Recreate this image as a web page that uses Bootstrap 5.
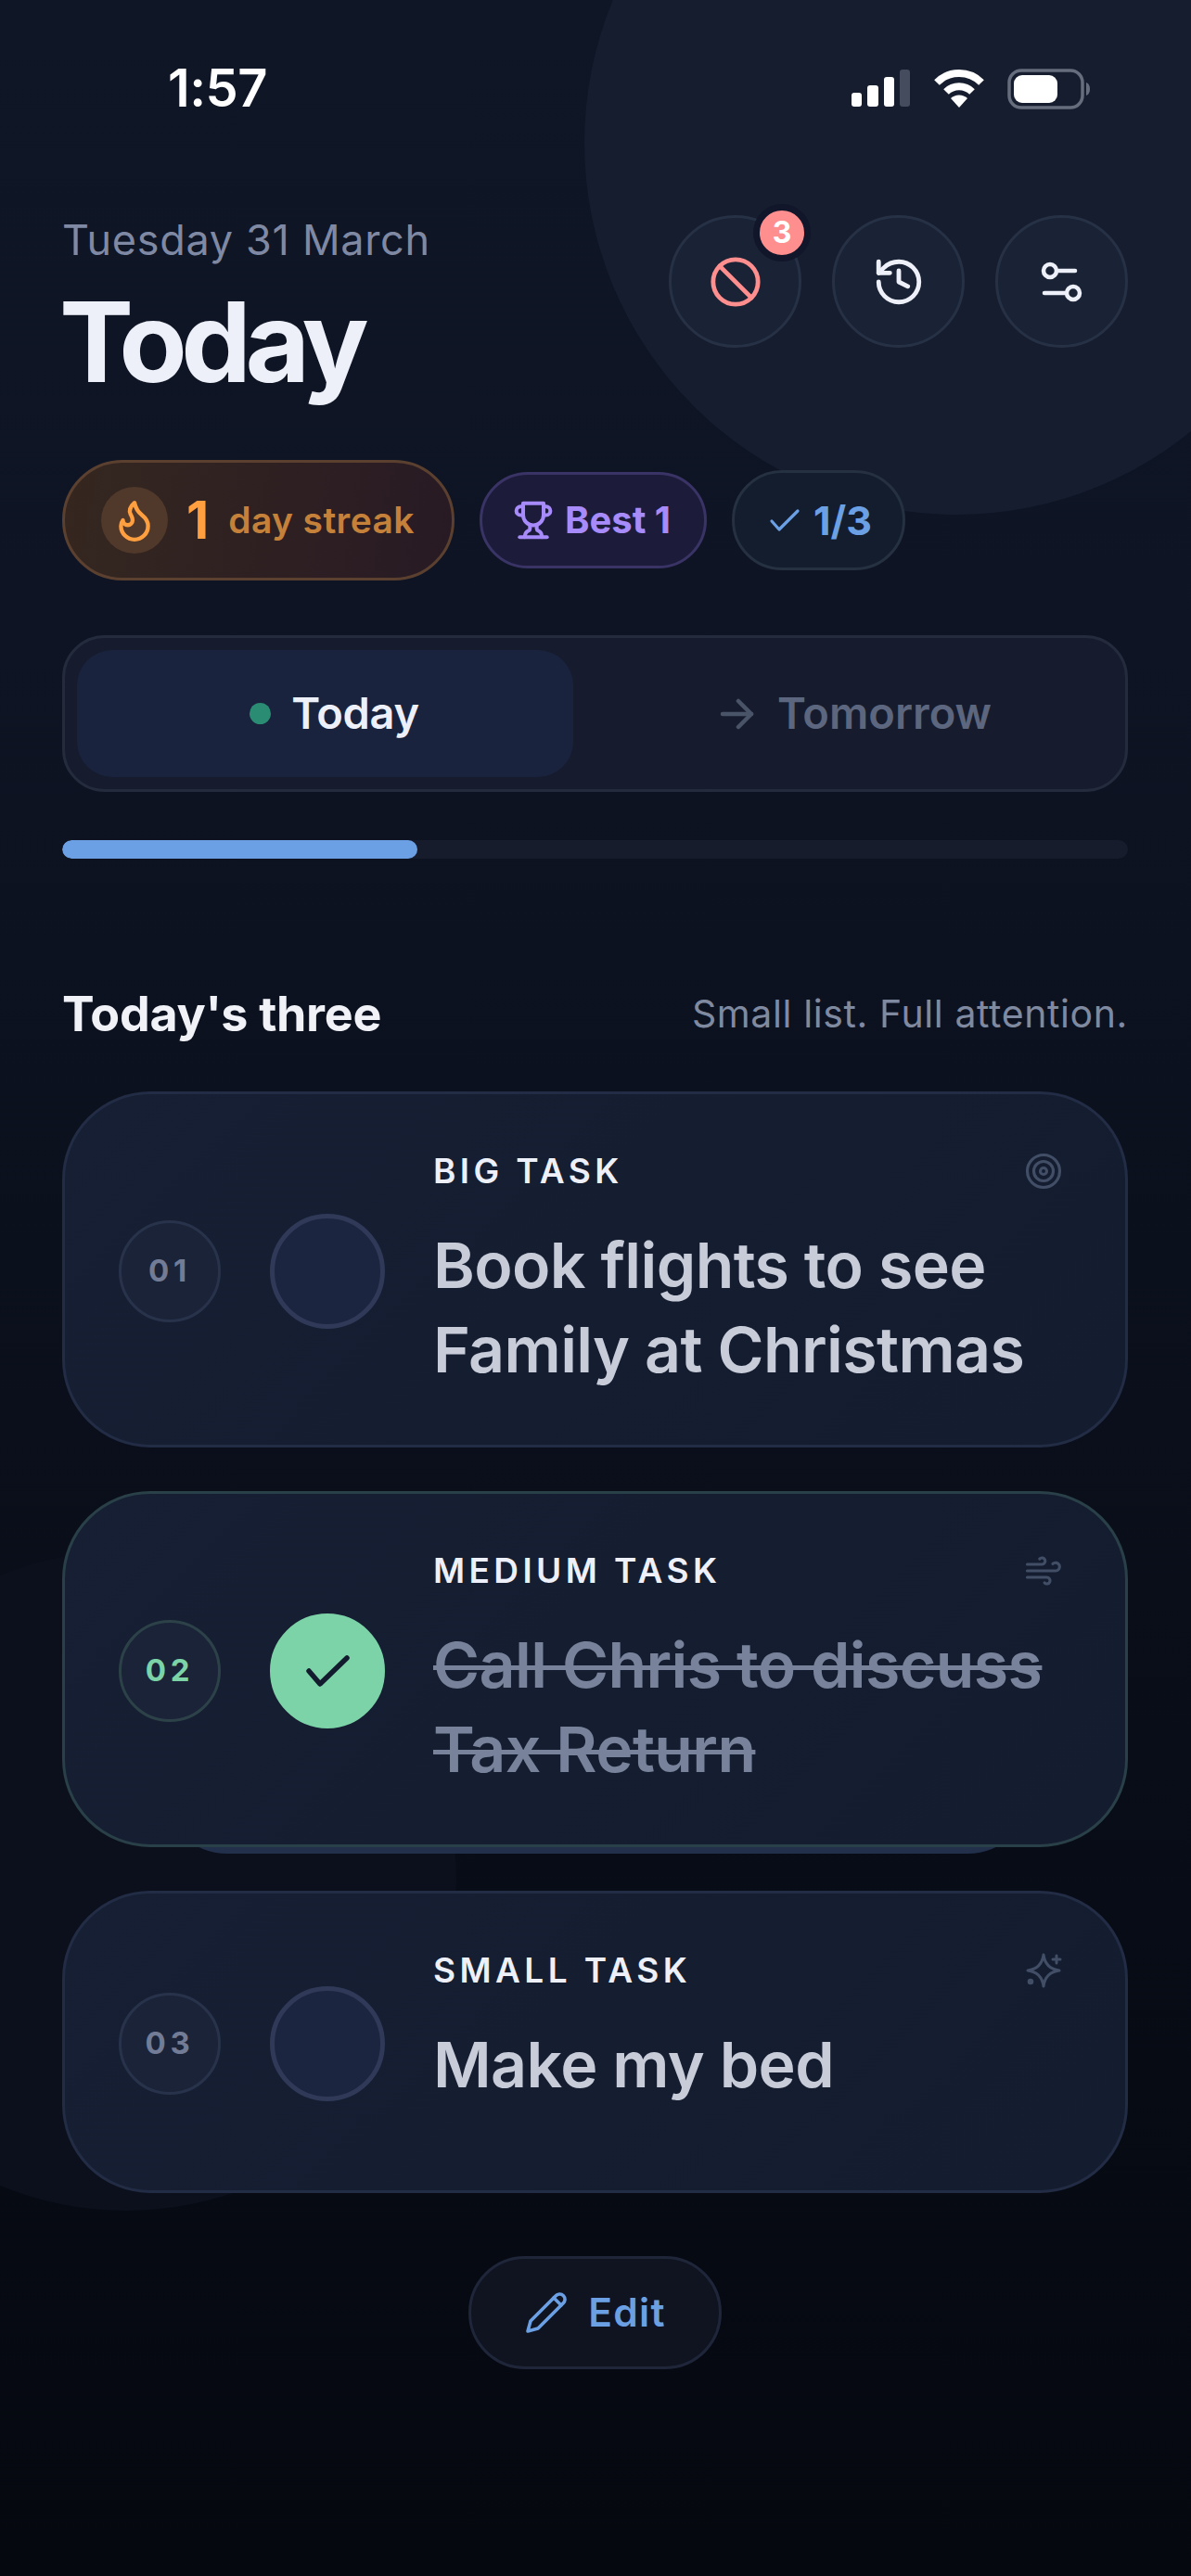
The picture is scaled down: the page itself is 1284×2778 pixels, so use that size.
<!DOCTYPE html>
<html lang="en">
<head>
    <meta charset="UTF-8">
    <meta name="viewport" content="width=device-width, initial-scale=1.0">
    <title>Today</title>
    <link rel="stylesheet" href="https://cdn.jsdelivr.net/npm/bootstrap@5.3.0/dist/css/bootstrap.min.css">
    <style>
        body {
            background: #060a14;
            font-family: "Inter", "Liberation Sans", sans-serif;
        }
        svg { display: block; flex-shrink: 0; fill: none; stroke-linecap: round; stroke-linejoin: round; }
        .screen {
            position: relative;
            z-index: 0;
            width: 1284px;
            height: 2778px;
            overflow: hidden;
            background: linear-gradient(180deg, #0f1626 0%, #0e1423 25%, #0a0f1b 55%, #05080f 100%);
        }
        .glow-top {
            position: absolute; z-index: -1;
            left: 630px; top: -247px;
            width: 802px; height: 802px;
            border-radius: 50%;
            background: #161d2e;
        }
        .glow-low {
            position: absolute; z-index: -1;
            left: -220px; top: 1672px;
            width: 712px; height: 712px;
            border-radius: 50%;
            background: #0b101c;
        }
        .status-row { height: 232px; padding: 67px 108px 0 181px; }
        .clock { font-size: 56px; font-weight: 600; line-height: 56px; color: #fff; letter-spacing: -0.5px; }
        .page-pad { padding: 0 68px 0 67px; }
        .date-line { font-size: 45px; line-height: 52px; margin-top: 1px; color: #7f89a3; letter-spacing: .7px; }
        .big-title { font-size: 120px; font-weight: 700; line-height: 130px; letter-spacing: -6.5px; color: #edf0f8; margin: 19px 0 0 -3px; }
        .round-btn {
            position: relative;
            width: 143px; height: 143px;
            border-radius: 50%;
            background: #1a2335;
            border: 3px solid #263146;
        }
        .ban-count {
            position: absolute;
            top: -15px; right: -13px;
            width: 62px; height: 62px;
            border-radius: 50%;
            background: #ff8e8e;
            border: 7px solid #11162a;
            color: #fff;
            font-size: 32px;
            font-weight: 700;
        }
        .head-row { height: 264px; }
        .chip-row { gap: 27px; height: 130px; }
        .chip {
            border-radius: 60px;
            border: 3px solid;
            font-weight: 700;
        }
        .chip-fire {
            height: 130px; width: 423px;
            padding-left: 39px;
            background: linear-gradient(100deg, #35271f, #281a24);
            border-color: #5b4030;
            border-radius: 65px;
        }
        .fire-dot { width: 72px; height: 72px; border-radius: 50%; background: #50382a; margin-right: 20px; }
        .fire-num { font-size: 56px; font-weight: 700; color: #ff9f3f; margin-right: 21px; }
        .fire-text { font-size: 39px; font-weight: 600; color: #c5813a; letter-spacing: .4px; }
        .chip-best { height: 104px; width: 245px; padding-left: 33px; background: #1c1c3a; border-color: #3a3466; color: #a78bfa; font-size: 40px; gap: 12px; }
        .chip-count { height: 108px; width: 187px; padding-left: 37px; background: #141d2e; border-color: #253040; color: #6ba0e4; font-size: 43px; gap: 14px; }
        .seg-box {
            margin-top: 59px;
            height: 169px;
            padding: 13px;
            gap: 26px;
            background: #161c2d;
            border: 3px solid #232b3d;
            border-radius: 46px;
        }
        .seg-on { width: 535px; padding-left: 20px; background: #19233e; border-radius: 38px; color: #edf0f8; font-size: 47px; font-weight: 600; gap: 22px; letter-spacing: -.3px; }
        .seg-off { flex: 1; color: #5c667e; font-size: 47px; font-weight: 600; gap: 23px; letter-spacing: 0; }
        .seg-dot { width: 23px; height: 23px; border-radius: 50%; background: #2b8c74; }
        .bar-track { margin-top: 52px; height: 20px; border-radius: 10px; background: #161c2c; overflow: hidden; }
        .bar-fill { height: 100%; background: #6ba0e4; border-radius: 10px; }
        .list-head { margin-top: 131px; height: 74px; }
        .list-title { font-size: 52px; font-weight: 700; color: #f0f2f8; letter-spacing: -.3px; }
        .list-note { font-size: 41px; color: #7f89a0; letter-spacing: .6px; }
        .task-list { margin-top: 46px; gap: 47px; }
        .task {
            position: relative;
            min-height: 326px;
            padding: 61px 67px 57px 58px;
            background: linear-gradient(135deg, #161f33, #141c2f);
            border: 3px solid #222c44;
            border-radius: 95px;
        }
        .task-done { border-color: #2a4048; }
        .task-done::after {
            content: "";
            position: absolute; z-index: -1;
            left: 105px; right: 100px; bottom: -10px;
            height: 80px;
            background: #22304c;
            border-radius: 0 0 70px 70px;
        }
        .num-ring {
            width: 110px; height: 110px;
            border-radius: 50%;
            background: #1a2338;
            border: 3px solid #28324a;
            color: #727c96;
            font-size: 33px;
            font-weight: 700;
            letter-spacing: 4.8px;
            margin-right: 53px;
        }
        .task-done .num-ring { border-color: #2c4248; color: #7dd3a8; }
        .tick-ring {
            width: 124px; height: 124px;
            border-radius: 50%;
            background: #1c2540;
            border: 5px solid #303a58;
            margin-right: 52px;
        }
        .task-done .tick-ring { background: #7dd3a8; border-color: #7dd3a8; }
        .task-body { flex: 1; min-width: 0; }
        .task-kind { height: 44px; font-size: 37px; font-weight: 600; letter-spacing: 4.4px; color: #edf0f8; }
        .task-name { margin: 34px 0 0; font-size: 68px; font-weight: 600; line-height: 91px; letter-spacing: -.6px; color: #c8ccd9; }
        .task-done .task-name { color: #78839b; text-decoration: line-through; text-decoration-thickness: 5px; }
        .edit-btn {
            margin-top: 68px;
            width: 273px; height: 122px;
            gap: 21px;
            border-radius: 61px;
            background: #0f1420;
            border: 3px solid #20263a;
            color: #6ba0e4;
            font-size: 42.5px;
            font-weight: 600;
            letter-spacing: 1.3px;
        }
    </style>
</head>
<body class="m-0">
<div class="screen">
    <div class="glow-top"></div>
    <div class="glow-low"></div>

    <div class="status-row d-flex justify-content-between align-items-start">
        <div class="clock">1:57</div>
        <div class="d-flex align-items-center" style="gap:24px;margin-top:7px">
            <svg width="64" height="42" viewBox="0 0 64 42"><rect x="0" y="25" width="11" height="15" rx="3" fill="#fff"/><rect x="17" y="17" width="12" height="23" rx="3" fill="#fff"/><rect x="35" y="8" width="11" height="32" rx="3" fill="#fff"/><rect x="52" y="0" width="11" height="40" rx="3" fill="#454c5e"/></svg>
            <svg width="56" height="42" viewBox="0 0 56 42"><path d="M4 14A34 34 0 0 1 52 14" stroke="#fff" stroke-width="8" stroke-linecap="butt"/><path d="M14 24A20 20 0 0 1 42 24" stroke="#fff" stroke-width="8" stroke-linecap="butt"/><path d="M19 31A13 13 0 0 1 37 31L28 41Z" fill="#fff"/></svg>
            <svg width="90" height="44" viewBox="0 0 90 44"><rect x="2" y="2" width="79" height="40" rx="13" stroke="#666d7d" stroke-width="3.5"/><rect x="7" y="7" width="47" height="30" rx="9" fill="#fff"/><path d="M85 15c3 1 4 4 4 7s-1 6-4 7Z" fill="#666d7d"/></svg>
        </div>
    </div>

    <div class="page-pad">
        <div class="head-row d-flex justify-content-between align-items-start">
            <div>
                <div class="date-line">Tuesday 31 March</div>
                <h1 class="big-title">Today</h1>
            </div>
            <div class="d-flex" style="gap:33px">
                <div class="round-btn d-flex align-items-center justify-content-center">
                    <svg width="58" height="58" viewBox="0 0 24 24" stroke="#ff8e8e" stroke-width="2"><circle cx="12" cy="12" r="10"/><path d="m4.9 4.9 14.2 14.2"/></svg>
                    <span class="ban-count d-flex align-items-center justify-content-center">3</span>
                </div>
                <div class="round-btn d-flex align-items-center justify-content-center">
                    <svg width="58" height="58" viewBox="0 0 24 24" stroke="#edf0f8" stroke-width="2"><path d="M3 12a9 9 0 1 0 9-9 9.75 9.75 0 0 0-6.74 2.74L3 8"/><path d="M3 3v5h5"/><path d="M12 7v5l4 2"/></svg>
                </div>
                <div class="round-btn d-flex align-items-center justify-content-center">
                    <svg width="58" height="58" viewBox="0 0 58 58" stroke="#edf0f8" stroke-width="4.5"><circle cx="16" cy="17" r="7"/><path d="M24 17h19"/><circle cx="41" cy="41" r="7"/><path d="M10 41h23"/></svg>
                </div>
            </div>
        </div>

        <div class="chip-row d-flex align-items-center">
            <div class="chip chip-fire d-flex align-items-center">
                <div class="fire-dot d-flex align-items-center justify-content-center">
                    <svg width="50" height="50" viewBox="0 0 24 24" stroke="#ff9f3f" stroke-width="2.1"><path d="M8.5 14.5A2.5 2.5 0 0 0 11 12c0-1.38-.5-2-1-3-1.072-2.143-.224-4.054 2-6 .5 2.5 2 4.9 4 6.5 2 1.6 3 3.5 3 5.5a7 7 0 1 1-14 0c0-1.153.433-2.294 1-3a2.5 2.5 0 0 0 2.5 2.5z"/></svg>
                </div>
                <span class="fire-num">1</span>
                <span class="fire-text">day streak</span>
            </div>
            <div class="chip chip-best d-flex align-items-center">
                <svg width="44" height="44" viewBox="0 0 24 24" stroke="#a78bfa" stroke-width="2.2"><path d="M6 9H4.5a2.5 2.5 0 0 1 0-5H6"/><path d="M18 9h1.5a2.5 2.5 0 0 0 0-5H18"/><path d="M4 22h16"/><path d="M10 14.66V17c0 .55-.47.98-.97 1.21C7.85 18.75 7 20.24 7 22"/><path d="M14 14.66V17c0 .55.47.98.97 1.21C16.15 18.75 17 20.24 17 22"/><path d="M18 2H6v7a6 6 0 0 0 12 0V2Z"/></svg>
                <span>Best 1</span>
            </div>
            <div class="chip chip-count d-flex align-items-center">
                <svg width="34" height="26" viewBox="0 0 34 26" stroke="#6ba0e4" stroke-width="3.2"><path d="M3 14l8 9L31 3"/></svg>
                <span>1/3</span>
            </div>
        </div>

        <div class="seg-box d-flex">
            <div class="seg-on d-flex align-items-center justify-content-center">
                <span class="seg-dot"></span>
                <span>Today</span>
            </div>
            <div class="seg-off d-flex align-items-center justify-content-center">
                <svg width="40" height="36" viewBox="0 0 40 36" stroke="#4a5468" stroke-width="4.5"><path d="M4 18h31"/><path d="M21 4l14 14-14 14"/></svg>
                <span>Tomorrow</span>
            </div>
        </div>

        <div class="bar-track"><div class="bar-fill" style="width:33.3%"></div></div>

        <div class="list-head d-flex justify-content-between align-items-center">
            <div class="list-title">Today's three</div>
            <div class="list-note">Small list. Full attention.</div>
        </div>

        <div class="task-list d-flex flex-column">
            <div class="task d-flex align-items-center">
                <div class="num-ring d-flex align-items-center justify-content-center">01</div>
                <div class="tick-ring"></div>
                <div class="task-body align-self-start">
                    <div class="task-kind d-flex justify-content-between align-items-center">
                        <span>BIG TASK</span>
                        <svg width="42" height="42" viewBox="0 0 24 24" stroke="#414e66" stroke-width="1.8"><circle cx="12" cy="12" r="10"/><circle cx="12" cy="12" r="6"/><circle cx="12" cy="12" r="2"/></svg>
                    </div>
                    <p class="task-name">Book flights to see Family at Christmas</p>
                </div>
            </div>
            <div class="task task-done d-flex align-items-center">
                <div class="num-ring d-flex align-items-center justify-content-center">02</div>
                <div class="tick-ring d-flex align-items-center justify-content-center">
                    <svg width="60" height="60" viewBox="0 0 60 60" stroke="#131b2e" stroke-width="5.5"><path d="M10 30l12 14L51 16"/></svg>
                </div>
                <div class="task-body align-self-start">
                    <div class="task-kind d-flex justify-content-between align-items-center">
                        <span>MEDIUM TASK</span>
                        <svg width="42" height="42" viewBox="0 0 24 24" stroke="#414e66" stroke-width="1.8"><path d="M17.7 7.7a2.5 2.5 0 1 1 1.8 4.3H2"/><path d="M9.6 4.6A2 2 0 1 1 11 8H2"/><path d="M12.6 19.4A2 2 0 1 0 14 16H2"/></svg>
                    </div>
                    <p class="task-name">Call Chris to discuss Tax Return</p>
                </div>
            </div>
            <div class="task d-flex align-items-center">
                <div class="num-ring d-flex align-items-center justify-content-center">03</div>
                <div class="tick-ring"></div>
                <div class="task-body align-self-start">
                    <div class="task-kind d-flex justify-content-between align-items-center">
                        <span>SMALL TASK</span>
                        <svg width="42" height="42" viewBox="0 0 42 42" stroke="#414e66" stroke-width="3"><path d="M21 4Q23 19 38 21Q23 23 21 38Q19 23 4 21Q19 19 21 4Z"/><path d="M35 5v8M31 9h8"/><circle cx="7" cy="33" r="1.8" fill="#414e66"/></svg>
                    </div>
                    <p class="task-name">Make my bed</p>
                </div>
            </div>
        </div>

        <div class="d-flex justify-content-center">
            <div class="edit-btn d-flex align-items-center justify-content-center">
                <svg width="48" height="48" viewBox="0 0 24 24" stroke="#6ba0e4" stroke-width="1.8"><path d="M17 3a2.85 2.83 0 1 1 4 4L7.5 20.5 2 22l1.5-5.5Z"/><path d="m16 4 4 4"/></svg>
                <span>Edit</span>
            </div>
        </div>
    </div>
</div>
</body>
</html>
